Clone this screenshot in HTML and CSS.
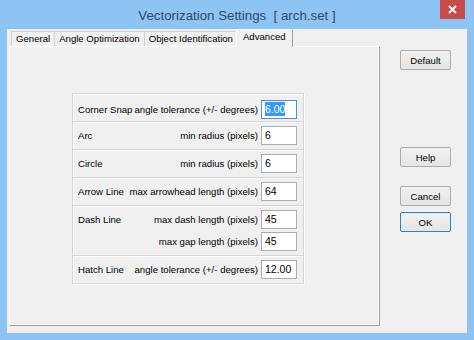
FILE: index.html
```html
<!DOCTYPE html>
<html lang="en">
<head>
  <meta charset="UTF-8">
  <meta name="viewport" content="width=device-width, initial-scale=1.0">
  <link rel="stylesheet" href="styles.css">
  <title>Vectorization Settings</title>
</head>
<body>
  <div class="window">
    <div class="titlebar">
      <span></span>
      <div class="title">Vectorization Settings&nbsp; [ arch.set ]</div>
      <div class="close">
        <svg width="9" height="9" viewBox="0 0 9 9"><path d="M1 1L8 8M8 1L1 8" stroke="#fff" stroke-width="1.8"/></svg>
      </div>
    </div>
    <div class="client">
      <div class="tabctl">
        <div class="tabstrip">
          <div class="tab">General</div>
          <div class="tab">Angle Optimization</div>
          <div class="tab">Object Identification</div>
          <div class="tab tab-active">Advanced</div>
        </div>
        <div class="panel">
          <div class="group">
            <div class="row row-first">
              <div class="name">Corner Snap</div>
              <div class="fields">
                <div class="field"><span class="desc">angle tolerance (+/- degrees)</span><div class="edit edit-focus"><span class="sel">6.00</span></div></div>
              </div>
            </div>
            <div class="row">
              <div class="name">Arc</div>
              <div class="fields">
                <div class="field"><span class="desc">min radius (pixels)</span><div class="edit">6</div></div>
              </div>
            </div>
            <div class="row">
              <div class="name">Circle</div>
              <div class="fields">
                <div class="field"><span class="desc">min radius (pixels)</span><div class="edit">6</div></div>
              </div>
            </div>
            <div class="row">
              <div class="name">Arrow Line</div>
              <div class="fields">
                <div class="field"><span class="desc">max arrowhead length (pixels)</span><div class="edit">64</div></div>
              </div>
            </div>
            <div class="row">
              <div class="name">Dash Line</div>
              <div class="fields">
                <div class="field"><span class="desc">max dash length (pixels)</span><div class="edit">45</div></div>
                <div class="field"><span class="desc">max gap length (pixels)</span><div class="edit">45</div></div>
              </div>
            </div>
            <div class="row row-last">
              <div class="name">Hatch Line</div>
              <div class="fields">
                <div class="field"><span class="desc">angle tolerance (+/- degrees)</span><div class="edit">12.00</div></div>
              </div>
            </div>
          </div>
        </div>
      </div>
      <div class="side">
        <button class="btn btn-default">Default</button>
        <button class="btn btn-help">Help</button>
        <button class="btn btn-cancel">Cancel</button>
        <button class="btn btn-ok">OK</button>
      </div>
    </div>
  </div>
</body>
</html>
```

FILE: styles.css
```css
body {
  margin: 0;
  background-color: #8ec4f4;
  font-family: "Liberation Sans", Arial, sans-serif;
  font-size: 9.6px;
  color: #000;
}

.window {
  width: 474px;
  height: 340px;
  background-color: #8ec4f4;
}

.titlebar {
  height: 29px;
  display: grid;
  grid-template-columns: 1fr auto 1fr;
  align-items: start;
}

.title {
  font-size: 13.3px;
  color: #2b4b6e;
  line-height: 29px;
  padding-top: 1px;
}

.close {
  justify-self: end;
  margin-right: 9px;
  width: 25px;
  height: 19px;
  background-color: #c94c4c;
  display: flex;
  align-items: center;
  justify-content: center;
}

.client {
  margin: 0 7px;
  height: 304px;
  background-color: #f0f0f0;
  display: flex;
}

.tabctl {
  margin-left: 2px;
  width: 371px;
}

.tabstrip {
  height: 17px;
  display: flex;
  align-items: flex-end;
  padding-left: 2px;
}

.tab {
  height: 14px;
  line-height: 14px;
  padding: 0 4px;
  border: 1px solid #d0d0d0;
  border-bottom: none;
  margin-right: -1px;
  background-color: #f0f0f0;
}

.tab-active {
  position: relative;
  height: 17px;
  line-height: 14px;
  margin-left: -1px;
  padding: 0 6px;
  border-color: #fff #a0a0a0 #f0f0f0 #fff;
  background-color: #f0f0f0;
  margin-bottom: -1px;
}

.panel {
  border: 1px solid;
  border-color: #fff #a0a0a0 #a0a0a0 #fff;
  box-shadow: inset -1px -1px 0 #fff;
  padding: 46px 0 0 62px;
  box-sizing: border-box;
  height: 280px;
}

.group {
  width: 232px;
  border: 1px solid #d5d5d5;
  box-shadow: inset 1px 1px 0 #fff, 1px 1px 0 #fff;
  box-sizing: border-box;
}

.row {
  display: flex;
  align-items: flex-start;
  padding: 4px 6px 4px 5px;
  border-bottom: 1px solid #d5d5d5;
  box-shadow: 0 1px 0 #fff;
}

.row-first {
  padding-top: 6px;
  padding-bottom: 2px;
}

.row-last {
  border-bottom: none;
  box-shadow: none;
}

.name {
  line-height: 19px;
  white-space: nowrap;
  margin-right: 2px;
}

.fields {
  flex: 1;
  display: flex;
  flex-direction: column;
  gap: 3px;
}

.field {
  display: flex;
  justify-content: flex-end;
  align-items: center;
  gap: 3px;
}

.desc {
  white-space: nowrap;
}

.edit {
  width: 36px;
  height: 19px;
  box-sizing: border-box;
  border: 1px solid #abadb3;
  background-color: #fff;
  font-size: 10.5px;
  line-height: 17px;
  padding-left: 3px;
}

.edit-focus {
  border-color: #4a90d9;
}

.sel {
  background-color: #3399ff;
  color: #fff;
  padding: 1px 0;
}

.side {
  display: flex;
  flex-direction: column;
  padding: 21px 0 0 20px;
}

.btn {
  width: 51px;
  height: 20px;
  font-family: "Liberation Sans", Arial, sans-serif;
  font-size: 9.6px;
  color: #000;
  border: 1px solid #adadad;
  border-radius: 2px;
  background: linear-gradient(#f2f2f2, #e5e5e5);
  padding: 0;
}

.btn-help {
  margin-top: 77px;
}

.btn-cancel {
  margin-top: 19px;
}

.btn-ok {
  margin-top: 6px;
  border-color: #3c7fb1;
  box-shadow: inset 0 0 0 1px #dcecfc;
}
```
